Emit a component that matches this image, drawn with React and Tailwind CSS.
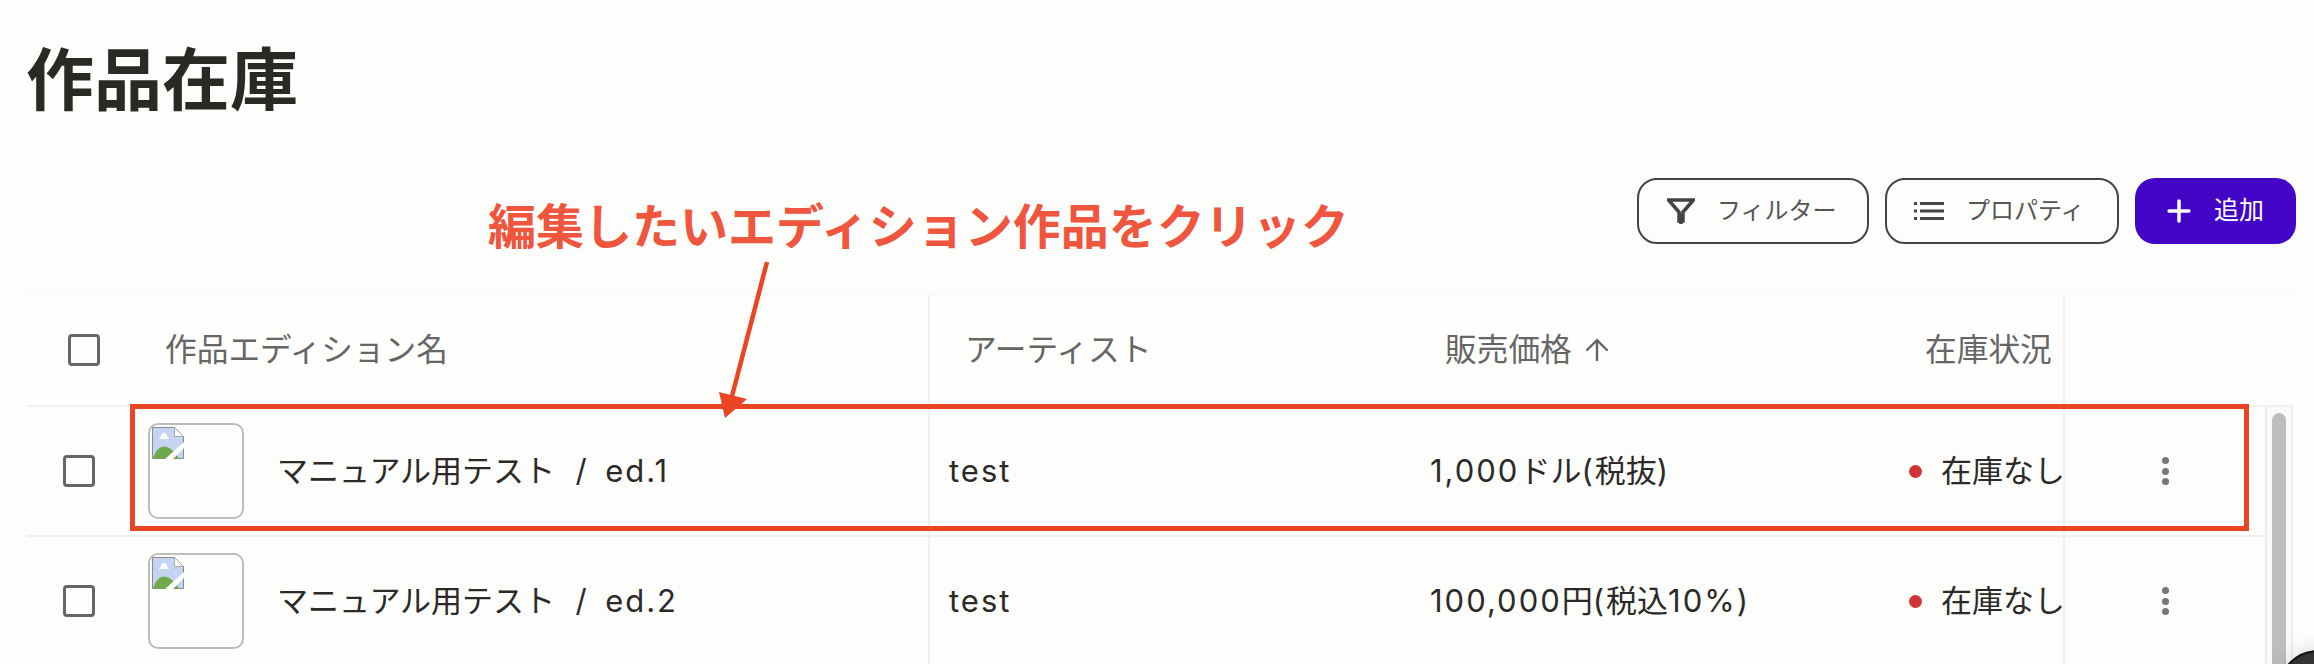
import { ArrowUp, Plus } from "lucide-react";

const rowGrid = "grid grid-cols-[901px_481px_480px_174px_202px]";
const font = "font-['Inter','Noto_Sans_CJK_JP',sans-serif]";

function FilterIcon() {
  return (
    <svg width="28" height="28" viewBox="0 0 28 28" fill="none">
      <path d="M1.500 3h25L16 15v9h-4v-9z" stroke="#444" strokeWidth="3.500" strokeLinejoin="miter" />
      <path d="M12 16h4v10a1 1 0 0 1-1 1h-2a1 1 0 0 1-1-1z" fill="#444" />
    </svg>
  );
}

function ListIcon() {
  return (
    <svg width="30" height="18" viewBox="0 0 30 18" fill="#444">
      <rect x="0" y="0" width="3" height="3" />
      <rect x="0" y="7.500" width="3" height="3" />
      <rect x="0" y="15" width="3" height="3" />
      <rect x="6" y="0" width="24" height="3" />
      <rect x="6" y="7.500" width="24" height="3" />
      <rect x="6" y="15" width="24" height="3" />
    </svg>
  );
}

function BrokenImage() {
  return (
    <svg width="32" height="32" viewBox="0 0 32 32" className="absolute left-[2px] top-[2px]">
      <path d="M.5.5h22l9 9v22H.5z" fill="#c4d4f2" stroke="#8a8a8a" />
      <path d="M22.500.5v9h9z" fill="#fff" stroke="#a8a8a8" />
      <path d="M1 31.500c2-7 6-12 11-12 6 0 11 6 15 12z" fill="#6eaa4a" />
      <path d="M8 13c0-1 .6-1.500 1.500-1.500C9.800 9 11 7 13 7c2 0 3.500 2 3.700 4.500.9 0 1.300.6 1.300 1.500z" fill="#fff" transform="translate(-1 -1)" />
      <path d="M13 32 32 15v6L21 32z" fill="#fdfdfb" />
    </svg>
  );
}

function Checkbox({ className }) {
  return <div className={`h-[32px] w-[32px] rounded-[4px] border-[3.5px] border-[#666] ${className}`} />;
}

function Kebab() {
  return (
    <div className="flex flex-col gap-[3.5px]">
      <span className="h-[7px] w-[7px] rounded-full bg-[#777]" />
      <span className="h-[7px] w-[7px] rounded-full bg-[#777]" />
      <span className="h-[7px] w-[7px] rounded-full bg-[#777]" />
    </div>
  );
}

// latin runs are set wider than the kana around them
function Latin({ children }) {
  return <span className="tracking-[2px]">{children}</span>;
}

function Row({ edition, price }) {
  return (
    <div className={`${rowGrid} h-[130px] border-b-2 border-[#f0f0ec]`}>
      <div className="flex items-center">
        <Checkbox className="ml-[36px]" />
        <div className="relative ml-[53px] h-[96px] w-[96px] rounded-[10px] border-2 border-[#bdbdbd]">
          <BrokenImage />
        </div>
        <span className="ml-[33px] text-[31px] text-[#2c2a28] whitespace-pre">
          マニュアル用テスト<span className="ml-[3px]">  /  </span>
          <span className="ml-[1px]"><Latin>{edition}</Latin></span>
        </span>
      </div>
      <div className="flex items-center border-l-2 border-[#f0f0ec] pl-[19px] text-[31px] text-[#2c2a28]">
        <Latin>test</Latin>
      </div>
      <div className="flex items-center pl-[21px] text-[31px] text-[#2c2a28]">
        <span className="whitespace-pre">{price}</span>
      </div>
      <div className="flex items-center overflow-hidden pl-[20px]">
        <span className="h-[13px] w-[13px] shrink-0 rounded-full bg-[#d13434]" />
        <span className="ml-[19px] whitespace-nowrap text-[31px] text-[#2c2a28]">在庫なし</span>
      </div>
      <div className="flex items-center justify-center border-l-2 border-[#f0f0ec]">
        <Kebab />
      </div>
    </div>
  );
}

export default function App() {
  return (
    <div className={`relative h-[664px] w-[2314px] overflow-hidden bg-[#fdfdfb] ${font}`}>
      <div className="h-[178px] pl-[26px] pt-[30px]">
        <h1 className="text-[68px] font-bold leading-[100px] text-[#2b2926]">作品在庫</h1>
      </div>

      <div className="flex h-[66px] justify-end gap-[16px] pr-[18px] text-[24px]">
        <button className="flex w-[232px] items-center rounded-[20px] border-2 border-[#444] pl-[28px] text-[#555]">
          <FilterIcon />
          <span className="ml-[22px]">フィルター</span>
        </button>
        <button className="flex w-[234px] items-center rounded-[20px] border-2 border-[#444] pl-[27px] text-[#555]">
          <ListIcon />
          <span className="ml-[22px]">プロパティ</span>
        </button>
        <button className="flex w-[161px] items-center rounded-[20px] bg-[#4306c6] pl-[27px] text-[25px] text-white">
          <Plus size={34} strokeWidth={2.500} />
          <span className="ml-[18px]">追加</span>
        </button>
      </div>

      <div className="ml-[27px] mt-[50px] w-[2266px]">
        <div className={`${rowGrid} h-[111px] border-t border-[#f8f8f5] bg-[#fefefc] text-[31.7px] text-[#666]`}>
          <div className="flex items-center">
            <Checkbox className="ml-[41px]" />
            <span className="ml-[65px]">作品エディション名</span>
          </div>
          <div className="flex items-center border-l-2 border-[#f0f0ec] pl-[35px]">アーティスト</div>
          <div className="flex items-center pl-[36px]">
            販売価格
            <ArrowUp size={34} strokeWidth={1.700} className="ml-[8px]" />
          </div>
          <div className="flex items-center pl-[36px] whitespace-nowrap">在庫状況</div>
          <div className="border-l-2 border-[#f0f0ec]" />
        </div>

        <div className="flex border-t-2 border-[#f0f0ec]">
          <div className="w-[2238px]">
            <Row edition="ed.1" price={<><Latin>1,000</Latin>ドル<Latin>(</Latin>税抜<Latin>)</Latin></>} />
            <Row edition="ed.2" price={<><Latin>100,000</Latin>円<Latin>(</Latin>税込<Latin>10%)</Latin></>} />
          </div>
          <div className="w-[28px] border-x-2 border-[#ececec] bg-[#fafafa] px-[5px] pt-[6px]">
            <div className="h-[300px] rounded-full bg-[#bdbdbd]" />
          </div>
        </div>
      </div>

      {/* annotation overlay */}
      <div className="absolute left-[488px] top-[193px] text-[48px] font-bold leading-[68px] whitespace-nowrap text-[#f0553d]">
        編集したいエディション作品をクリック
      </div>
      <div className="absolute left-[130px] top-[404px] h-[127px] w-[2119px] border-[5px] border-[#ea4425]" />
      <svg className="absolute left-[700px] top-[250px]" width="90" height="180" viewBox="0 0 90 180" fill="none">
        <path d="M67 12 31 150" stroke="#ea4425" strokeWidth="4.500" />
        <path d="M19 142 25 168 47 149z" fill="#ea4425" />
      </svg>

      {/* floating chat button */}
      <div className="absolute left-[2278px] top-[650px] h-[80px] w-[80px] rounded-full border-2 border-[#111] bg-[#333] shadow-[0_0_20px_rgba(0,0,0,0.15)]" />
    </div>
  );
}
